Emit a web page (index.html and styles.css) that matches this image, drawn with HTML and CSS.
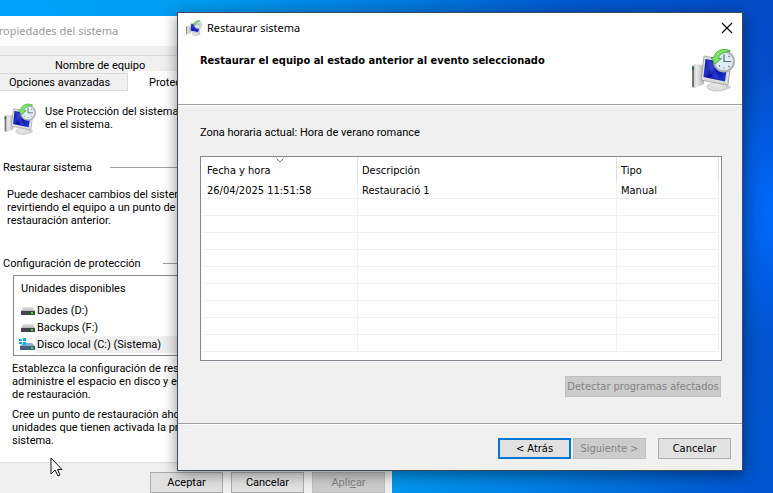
FILE: index.html
```html
<!DOCTYPE html>
<html lang="es">
<head>
<meta charset="utf-8">
<title>Restaurar sistema</title>
<link rel="stylesheet" href="styles.css">
</head>
<body>
<svg class="sprites" aria-hidden="true">
  <defs>
    <linearGradient id="screen" x1="0" y1="0" x2="1" y2="1">
      <stop offset="0" stop-color="#0b16a8"/><stop offset=".35" stop-color="#2232c0"/>
      <stop offset=".5" stop-color="#0a12a6"/><stop offset="1" stop-color="#2040dc"/>
    </linearGradient>
    <linearGradient id="metal" x1="0" y1="0" x2="1" y2="0">
      <stop offset="0" stop-color="#a5a5a5"/><stop offset=".35" stop-color="#ececec"/><stop offset="1" stop-color="#b4b4b4"/>
    </linearGradient>
    <linearGradient id="drive" x1="0" y1="0" x2="0" y2="1">
      <stop offset="0" stop-color="#e4e6e8"/><stop offset="1" stop-color="#b4b8bc"/>
    </linearGradient>
  </defs>
  <symbol id="restore" viewBox="0 0 44 44">
    <path d="M1 18l3-2 9 1v19l-9 4-3-1z" fill="url(#metal)"/>
    <path d="M1 18l2 .5v21L1 39z" fill="#777"/>
    <path d="M1 19h2v3H1z" fill="#2d6a3a"/>
    <ellipse cx="31" cy="39" rx="9" ry="3" fill="#d2d2d2"/>
    <ellipse cx="26" cy="39" rx="10" ry="4" fill="#dedede" stroke="#b4b4b4" stroke-width=".7"/>
    <path d="M20 33l9 1v5h-9z" fill="#e4e4e4"/>
    <path d="M13 8l27 5-3 24-27-5z" fill="#dcdcdc" stroke="#999" stroke-width=".8"/>
    <path d="M14.500 11l22 4-2.500 18.500-21.500-4.500z" fill="url(#screen)"/>
    <path d="M15 12l6 1 7 18-6-1z" fill="#5968df" opacity=".3"/>
    <circle cx="33" cy="13.500" r="10" fill="#dfe8ed" stroke="#a5adb2" stroke-width="1.800"/>
    <circle cx="33" cy="13.500" r="7.500" fill="#e0edf5"/>
    <path d="M33 6.500v7h7M26 13.500h1M33 19.500v1M37.500 9l1-1M37.500 18l1 1M28 18.500l1-1" fill="none" stroke="#586b79" stroke-width="1.200"/>
    <path d="M39 2.500C31-.5 24 3 23 9.500H20l4 6.500 6.500-5.500h-3C28 6 33 3.500 39 3.500z" fill="#80e563" stroke="#37a02c" stroke-width=".8"/>
  </symbol>
  <symbol id="disk" viewBox="0 0 14 10">
    <path d="M2 1h10l2 4H0z" fill="url(#drive)"/><path d="M0 5h14v4H0z" fill="#414448"/><path d="M10 6h2v2h-2z" fill="#38e33b"/>
  </symbol>
  <symbol id="sysdisk" viewBox="0 0 16 13">
    <path d="M4 5h9l3 3H1z" fill="#8aaed0"/><path d="M1 8h15v4H1z" fill="#3d617f"/><path d="M12 9h2v2h-2z" fill="#38e33b"/>
    <path d="M0 1h3v2H0zM4 0h3v3H4zM0 4h3v2H0zM4 4h3v3H4z" fill="#12a9e5"/>
  </symbol>
</svg>
<main class="desktop">
  <section class="window properties" aria-label="Propiedades del sistema">
    <h2 class="prop-title">Propiedades del sistema</h2>
    <nav class="tabs">
      <div class="tab-row"><button class="tab wide">Nombre de equipo</button></div>
      <div class="tab-row"><button class="tab">Opciones avanzadas</button><button class="tab active">Protección del sistema</button></div>
    </nav>
    <div class="prop-body">
      <div class="intro"><svg class="intro-icon" aria-hidden="true"><use href="#restore"/></svg><p>Use Protección del sistema para deshacer cambios<br>en el sistema.</p></div>
      <h3 class="group restore-group">Restaurar sistema</h3>
      <p class="restore-text">Puede deshacer cambios del sistema<br>revirtiendo el equipo a un punto de<br>restauración anterior.</p>
      <h3 class="group config-group">Configuración de protección</h3>
      <div class="drives">
        <div class="drives-head">Unidades disponibles</div>
        <ul>
          <li><svg class="disk" aria-hidden="true"><use href="#disk"/></svg><span>Dades (D:)</span></li>
          <li><svg class="disk" aria-hidden="true"><use href="#disk"/></svg><span>Backups (F:)</span></li>
          <li class="selected"><svg class="disk system" aria-hidden="true"><use href="#sysdisk"/></svg><span>Disco local (C:) (Sistema)</span></li>
        </ul>
      </div>
      <p class="note">Establezca la configuración de restauración,<br>administre el espacio en disco y elimine puntos<br>de restauración.</p>
      <p class="note">Cree un punto de restauración ahora para las<br>unidades que tienen activada la protección del<br>sistema.</p>
    </div>
    <footer class="prop-actions"><button class="button">Aceptar</button><button class="button">Cancelar</button><button class="button" disabled>Apli<u>c</u>ar</button></footer>
  </section>

  <section class="window dialog" role="dialog" aria-labelledby="dialog-title">
    <header class="titlebar">
      <svg class="title-icon" aria-hidden="true"><use href="#restore"/></svg>
      <h1 id="dialog-title">Restaurar sistema</h1>
      <button class="close" aria-label="Cerrar"><svg viewBox="0 0 12 12"><path d="M1 1l10 10M11 1L1 11" fill="none" stroke="#000" stroke-width="1.100"/></svg></button>
    </header>
    <div class="banner"><h2>Restaurar el equipo al estado anterior al evento seleccionado</h2><svg aria-hidden="true"><use href="#restore"/></svg></div>
    <div class="content">
      <p class="zone">Zona horaria actual: Hora de verano romance</p>
      <div class="list">
        <table>
          <colgroup><col class="date"><col class="description"><col></colgroup>
          <thead><tr><th>Fecha y hora<svg class="sort" viewBox="0 0 8 5" aria-hidden="true"><path d="M.5.5L4 4 7.500.5" fill="none" stroke="#777"/></svg></th><th>Descripción</th><th>Tipo</th></tr></thead>
          <tbody>
            <tr><td>26/04/2025 11:51:58</td><td>Restauració 1</td><td>Manual</td></tr>
            <tr><td></td><td></td><td></td></tr><tr><td></td><td></td><td></td></tr><tr><td></td><td></td><td></td></tr>
            <tr><td></td><td></td><td></td></tr><tr><td></td><td></td><td></td></tr><tr><td></td><td></td><td></td></tr>
            <tr><td></td><td></td><td></td></tr><tr><td></td><td></td><td></td></tr><tr><td></td><td></td><td></td></tr>
          </tbody>
        </table>
      </div>
      <div class="scan"><button class="button detect" disabled>Detectar programas afectados</button></div>
    </div>
    <footer class="dialog-actions"><button class="button default">&lt; Atrás</button><button class="button" disabled>Siguiente &gt;</button><button class="button cancel">Cancelar</button></footer>
  </section>
  <svg class="cursor" viewBox="0 0 13 20" aria-hidden="true"><path d="M1 1v16l4-4 3 6 2-1-2.500-5.500H12z" fill="#fff" stroke="#111"/></svg>
</main>
</body>
</html>
```
FILE: styles.css
```css
* { box-sizing: border-box; }
body { margin: 0; }
h1, h2, h3, p, ul { margin: 0; padding: 0; font-weight: 400; font-size: inherit; }
ul { list-style: none; }
.sprites { position: absolute; width: 0; height: 0; }

.desktop {
  position: relative;
  min-height: 100vh;
  overflow: hidden;
  background:
    radial-gradient(ellipse 70px 140px at 100% 43%, rgba(0, 108, 255, .9), rgba(0, 108, 255, 0)),
    linear-gradient(72deg, #00a4fa 12%, #009cf0 38%, #007ade 60%, #0058d0 78%, #044bc6 100%);
}

.window { position: absolute; display: flex; flex-direction: column; color: #000; }

/* System properties */
.properties {
  top: 16px; left: -12px; width: 404px; height: 489px;
  background: #f0f0f0;
  font: 11px/13px Roboto, sans-serif;
}
.prop-title { height: 30px; padding-left: 4px; background: #fff; color: #999; font: 11px/30px "Noto Sans", sans-serif; }
.tabs { padding-top: 9px; }
.tab-row { display: flex; }
.tab { height: 18px; padding: 1px 20px 0; border: 1px solid #d9d9d9; border-bottom: 0; background: #f0f0f0; font: inherit; text-align: left; white-space: nowrap; }
.tab:first-child:not(.wide) { width: 140px; border-bottom: 1px solid #d9d9d9; }
.tab.wide { flex: 1; padding-left: 66px; }
.tab.active { flex: 1; height: 20px; margin-top: -2px; border-color: #fff; background: #fff; }
.prop-body { flex: 1; padding: 12px 12px 0 24px; background: #fff; border-bottom: 1px solid #d9d9d9; }
.intro { display: flex; gap: 9px; margin-left: -8px; }
.intro-icon { flex: none; width: 32px; height: 32px; }
.intro p { padding-top: 2px; white-space: nowrap; }
.group { display: flex; align-items: center; gap: 18px; margin-left: -9px; }
.group::after { content: ""; flex: 1; height: 1px; background: #a0a0a0; }
.restore-group { margin-top: 26px; }
.restore-text { margin: 14px 0 30px -5px; }
.config-group { gap: 22px; }
.drives { height: 81px; margin: 5px 0 6px 1px; padding-left: 7px; border: 1px solid #828790; }
.drives-head { line-height: 26px; }
.drives li { display: flex; align-items: center; height: 17px; }
.drives li span { flex: 1; padding-left: 2px; line-height: 17px; }
.drives .selected { margin-left: -2px; }
.drives .selected span { background: #f0f0f0; }
.disk { width: 14px; height: 10px; }
.disk.system { width: 16px; height: 13px; }
.note { margin-bottom: 7px; white-space: nowrap; }
.prop-actions { display: flex; justify-content: flex-end; gap: 8px; padding: 9px 7px 12px; }

.button {
  min-width: 73px; height: 21px; padding: 0;
  border: 1px solid #adadad; background: #e1e1e1; color: #000;
  font: inherit; white-space: nowrap;
}
.button:disabled { background: #ccc; border-color: #bfbfbf; color: #838383; }

/* Restore dialog */
.dialog {
  inset: 12px 30px 22px 177px;
  border: 1px solid #394b5c;
  background: #f0f0f0;
  font: 11px/13px "DejaVu Sans Condensed", sans-serif;
  box-shadow: 0 3px 14px rgba(0, 0, 0, .45);
}
.titlebar { display: flex; align-items: center; height: 30px; padding: 0 9px 0 8px; background: #fff; }
.title-icon { width: 16px; height: 16px; }
h1 { flex: 1; padding-left: 5px; font: 11px/30px "Noto Sans", sans-serif; }
.close { width: 12px; height: 12px; padding: 0; border: 0; background: none; }
.close svg { display: block; }
.banner { display: flex; justify-content: space-between; height: 62px; padding: 5px 7px 0 22px; background: #fff; border-bottom: 1px solid #a0a0a0; }
.banner h2 { padding-top: 6px; font-weight: 700; }
.banner svg { width: 44px; height: 44px; }
.content { flex: 1; display: flex; flex-direction: column; padding: 20px 20px 0 22px; border-top: 1px solid #fff; }
.zone { font-family: Roboto, sans-serif; }
.list { margin-top: 17px; padding: 0 2px 8px 1px; border: 1px solid #828790; background: #fff; }
table { width: 100%; border-collapse: separate; border-spacing: 0; table-layout: fixed; }
.date { width: 156px; }
.description { width: 259px; }
th, td { height: 17px; padding: 0 4px; border-right: 1px solid #f0f0f0; border-bottom: 1px solid #f0f0f0; text-align: left; font-weight: 400; line-height: 13px; }
th:first-child, td:first-child { padding-left: 5px; }
th { position: relative; height: 25px; padding-top: 2px; border-bottom: 0; border-right-color: #e0e0e0; }
.sort { position: absolute; top: 1px; left: 48%; width: 8px; height: 5px; }
.scan { display: flex; justify-content: flex-end; padding: 15px 1px 0 0; }
.detect { width: 156px; }
.dialog-actions { display: flex; justify-content: flex-end; height: 47px; padding: 14px 11px 0; border-top: 1px solid #a0a0a0; box-shadow: inset 0 1px #fff; }
.default { margin-right: 2px; border: 2px solid #0078d7; }
.cancel { margin-left: 12px; }
.cursor { position: absolute; top: 457px; left: 50px; width: 13px; height: 20px; }
```
